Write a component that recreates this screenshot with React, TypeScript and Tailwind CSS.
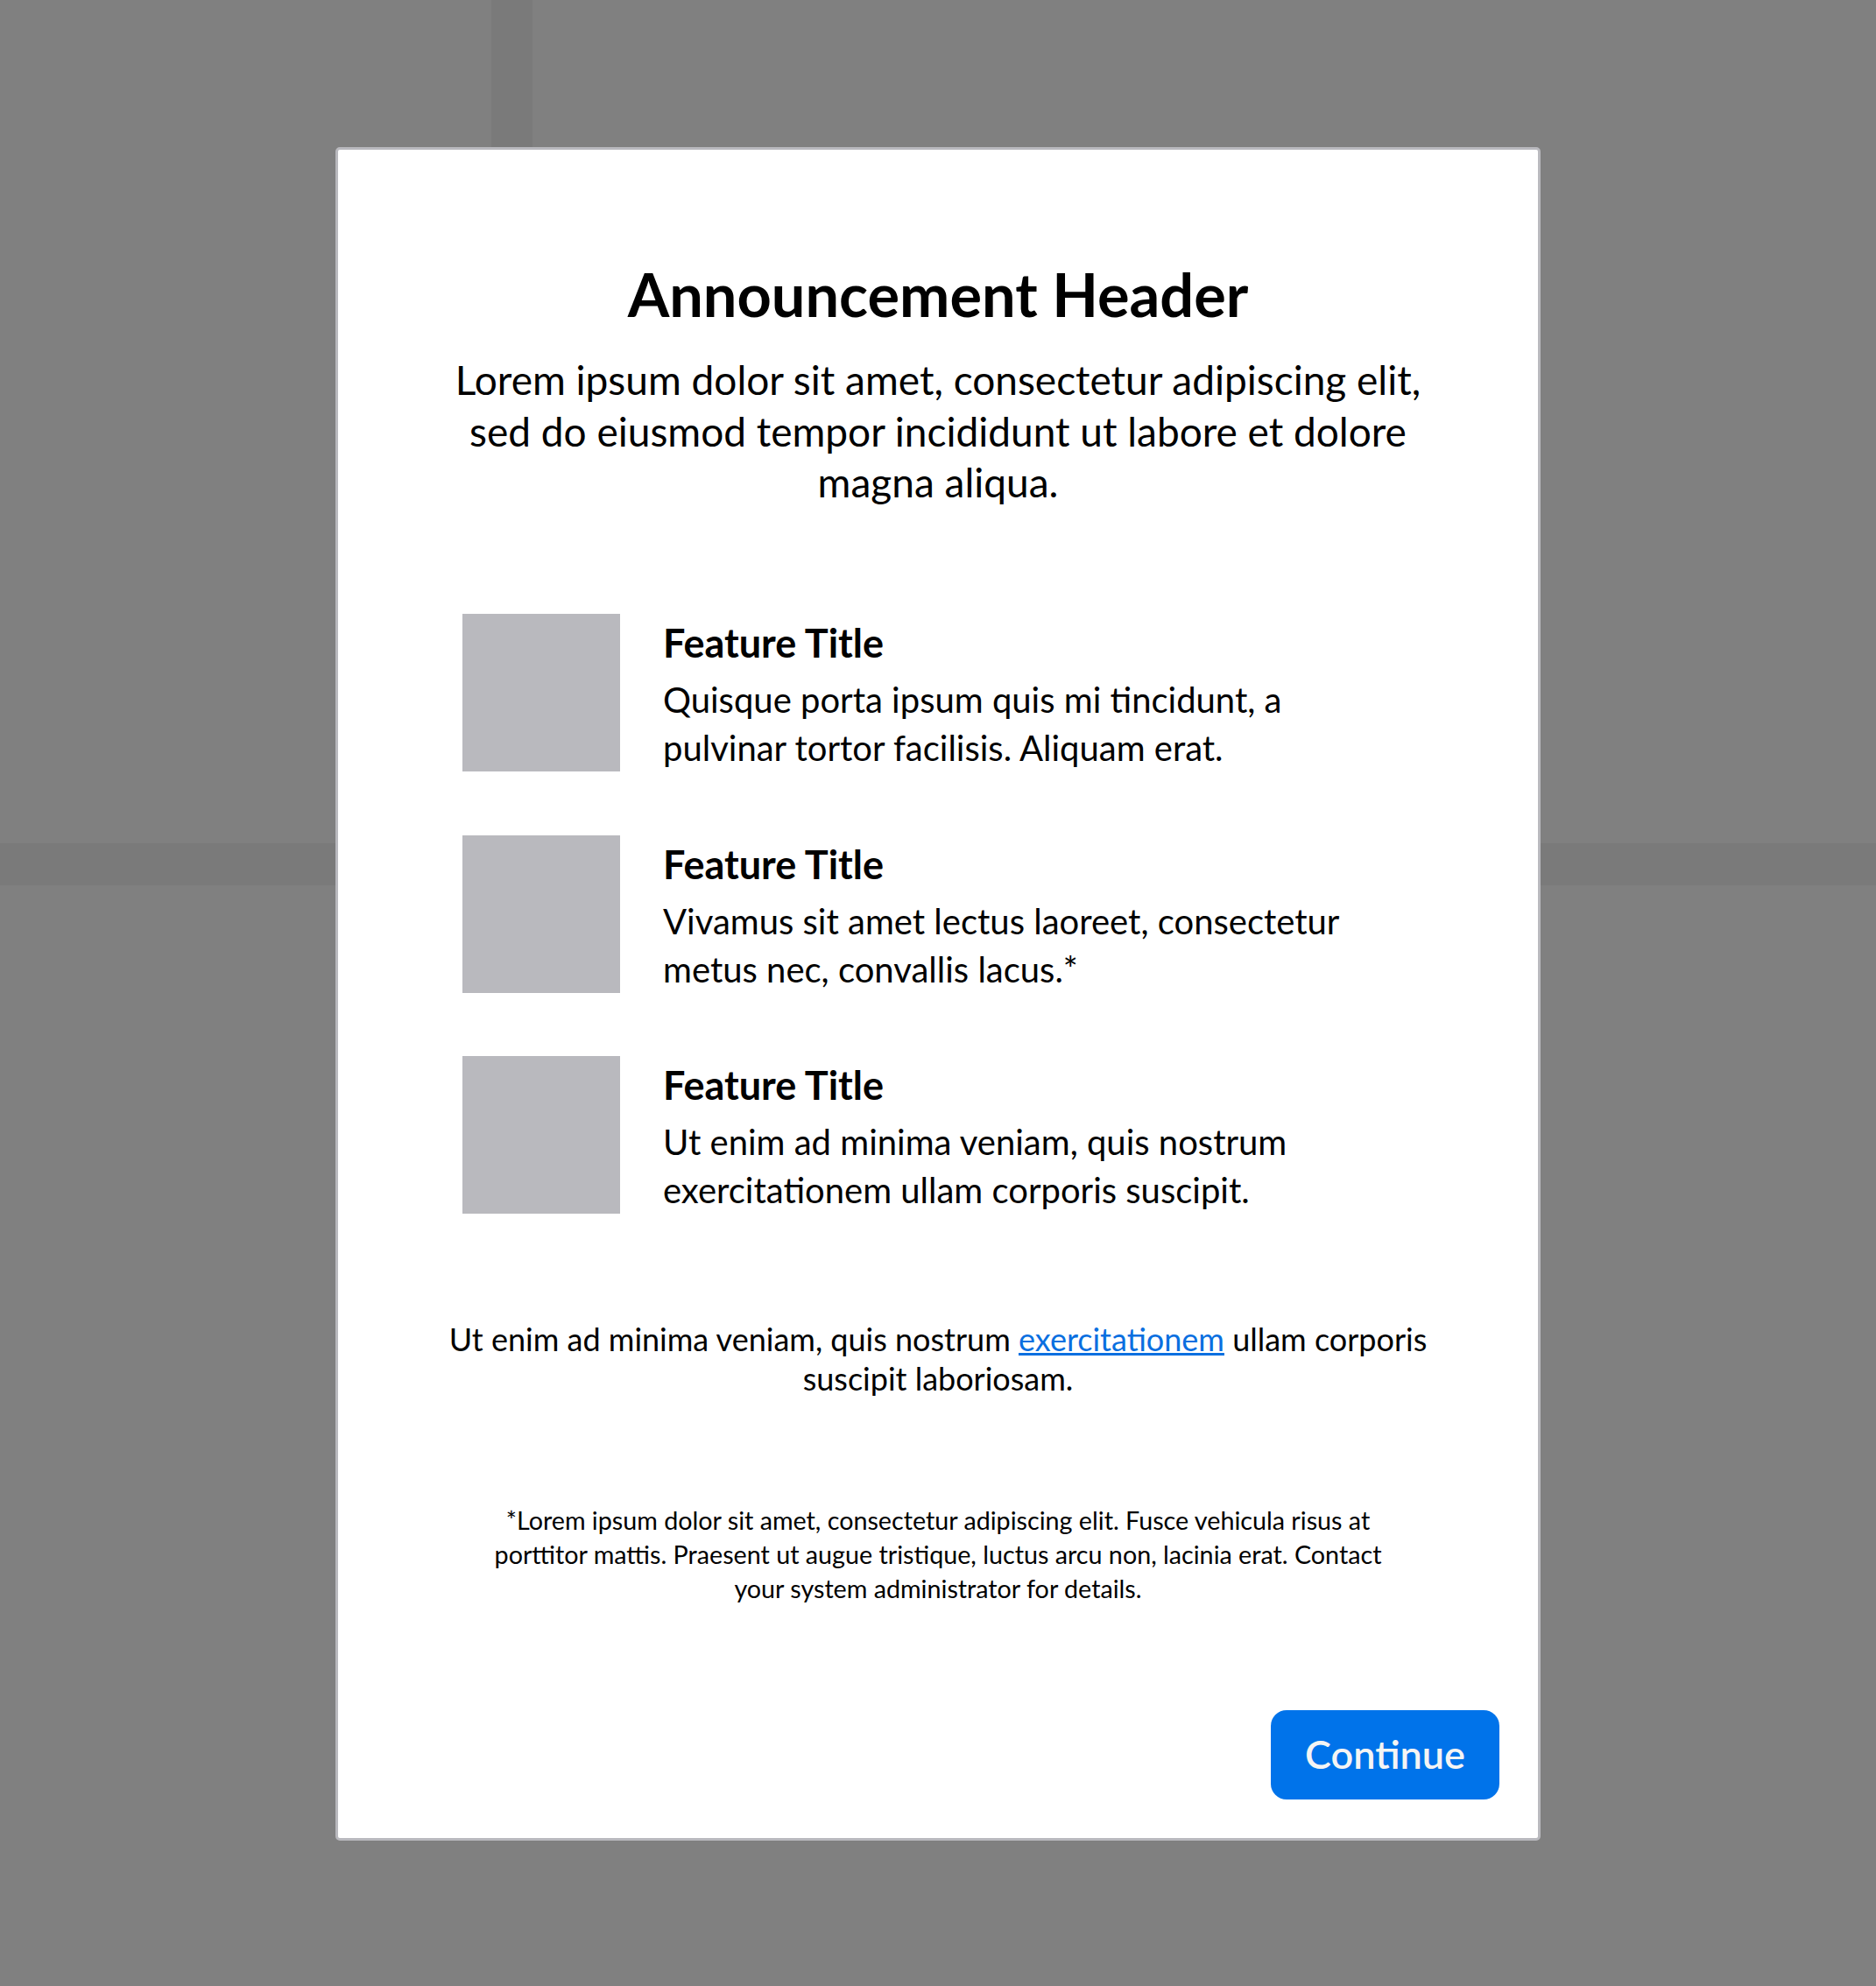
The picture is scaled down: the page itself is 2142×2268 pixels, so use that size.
const features = [
  {
    title: "Feature Title",
    text: "Quisque porta ipsum quis mi tincidunt, a pulvinar tortor facilisis. Aliquam erat.",
  },
  {
    title: "Feature Title",
    text: "Vivamus sit amet lectus laoreet, consectetur metus nec, convallis lacus.*",
  },
  {
    title: "Feature Title",
    text: "Ut enim ad minima veniam, quis nostrum exercitationem ullam corporis suscipit.",
  },
];

export default function App() {
  return (
    <div className="relative flex h-[2268px] w-full items-center justify-center overflow-hidden bg-[#808080] pt-[2px] font-['Lato',sans-serif] text-black">
      {/* backdrop behind the modal */}
      <div className="absolute left-[561px] top-0 h-[963px] w-[47px] bg-[#7a7a7a]" />
      <div className="absolute left-0 top-[963px] h-[48px] w-full bg-[#7a7a7a]" />

      <div className="relative flex h-[1934px] w-[1376px] flex-col items-center rounded-[5px] border-[3px] border-[#b9b9be] bg-white pt-[131px]">
        <h1 className="text-[68.5px] font-bold leading-none">Announcement Header</h1>
        <p className="mt-[34.5px] w-[1130px] text-center text-[46px] leading-[58.5px]">
          Lorem ipsum dolor sit amet, consectetur adipiscing elit, sed do eiusmod tempor incididunt ut labore et dolore magna aliqua.
        </p>

        <div className="mt-[120.5px] flex w-full flex-col gap-[71.5px] px-[142px]">
          {features.map((f, i) => (
            <div key={i} className="flex items-start">
              <div className="h-[180px] w-[180px] shrink-0 bg-[#b9b9be]" />
              <div className="ml-[49px] w-[800px] pt-[11px]">
                <h2 className="text-[45px] font-bold leading-[45px]">{f.title}</h2>
                <p className="mt-[15px] text-[40px] leading-[55px]">{f.text}</p>
              </div>
            </div>
          ))}
        </div>

        <p className="mt-[120px] w-[1150px] text-center text-[36px] leading-[45px]">
          Ut enim ad minima veniam, quis nostrum{" "}
          <a href="#" className="text-[#0a6fe0] underline">
            exercitationem
          </a>{" "}
          ullam corporis suscipit laboriosam.
        </p>

        <p className="mt-[120px] w-[1040px] text-center text-[28.7px] leading-[39px]">
          *Lorem ipsum dolor sit amet, consectetur adipiscing elit. Fusce vehicula risus at porttitor mattis. Praesent ut augue tristique, luctus arcu non, lacinia erat. Contact your system administrator for details.
        </p>

        <div className="mt-auto flex w-full justify-end px-[44px] pb-[44px]">
          <button className="h-[102px] w-[261px] rounded-[18px] bg-[#0073ea] text-[45px] font-semibold text-[#f4f4f4]">
            Continue
          </button>
        </div>
      </div>
    </div>
  );
}
